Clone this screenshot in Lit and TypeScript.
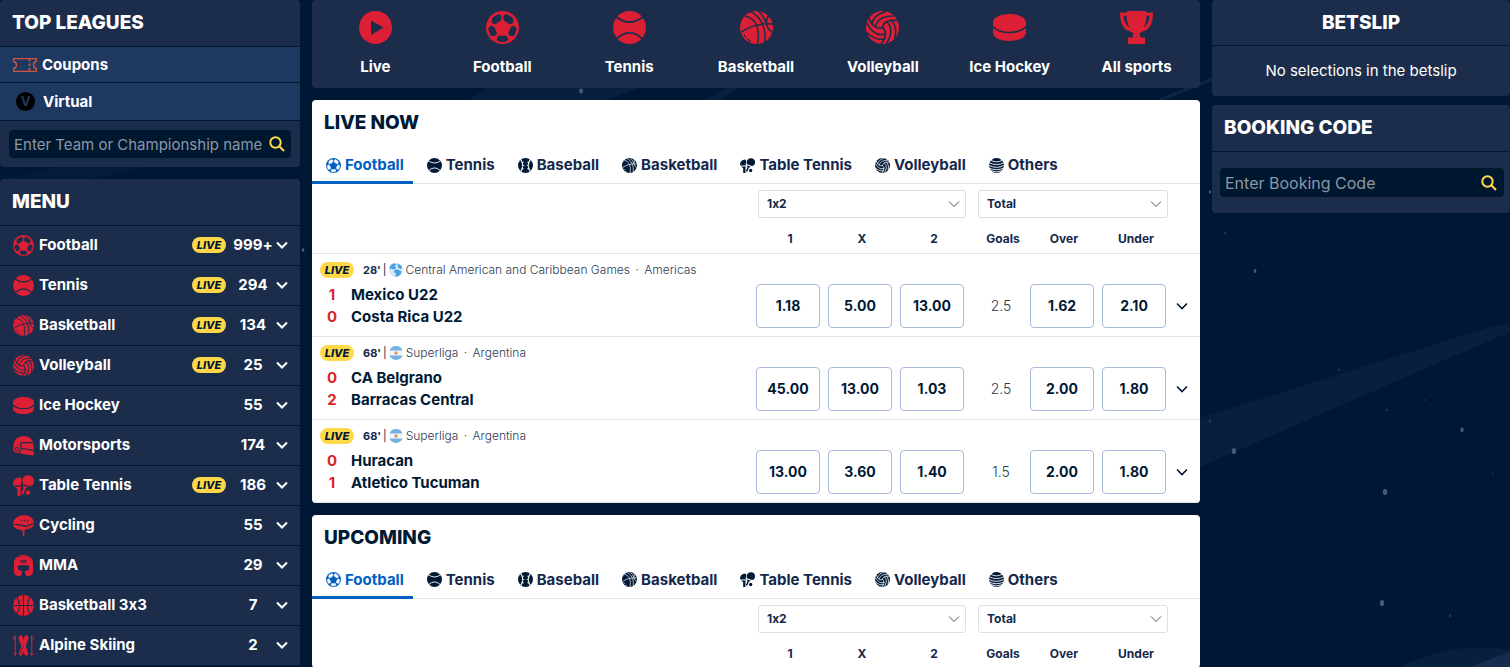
import { LitElement, html, css, svg, nothing } from "lit";
import { customElement, property } from "lit/decorators.js";

type Art = ReturnType<typeof svg>;

const seam = svg`<g fill="none" stroke="var(--cut)" stroke-width="1.6">
  <path d="M16.500 17C17 12 21 8 32 9.500"/>
  <path d="M9.500 16.500C10 10 16 4.500 28.500 5"/>
  <path d="M5.500 13.500C7 7 12 2.500 20 .5"/>
</g>`;

const ICONS: Record<string, Art> = {
  live: svg`<circle cx="16.5" cy="16.5" r="16.5"/><path d="M12 9.500L24.500 16.500L12 24Z" fill="var(--cut)"/>`,
  football: svg`<circle cx="16.5" cy="16.5" r="16.5"/>
    <g fill="var(--cut)" stroke="var(--cut)" stroke-linejoin="round" stroke-width="1">
      <path d="M6.500 7L12.500 3.500L15 4.800V9L9 13L6 11.500Z"/>
      <path d="M26.500 7L20.500 3.500L18 4.800V9L24 13L27 11.500Z"/>
      <path d="M2.500 17.500L5.500 15L8 16.500L10.500 22.500L9 24.500H5Z"/>
      <path d="M30.500 17.500L27.500 15L25 16.500L22.500 22.500L24 24.500H28Z"/>
      <path d="M12.500 25.200H20.500L22 28.500L19.500 30.500H13.500L11 28.500Z"/>
    </g>`,
  tennis: svg`<circle cx="16.5" cy="16.5" r="16.5"/>
    <path d="M2.500 5.500Q16.500 16.500 30.500 5.500M3.500 28Q16.500 15.500 29.500 28" fill="none" stroke="var(--cut)" stroke-width="2"/>`,
  baseball: svg`<circle cx="16.5" cy="16.5" r="16.5"/>
    <path d="M6 3.500Q15.500 16.500 6 29.500M27 3.500Q17.500 16.500 27 29.500" fill="none" stroke="var(--cut)" stroke-width="2.400"/>
    <path d="M7.500 11L13 9M8.500 16.500H14M7.500 22L13 24M25.500 11L20 9M24.500 16.500H19M25.500 22L20 24" fill="none" stroke="var(--cut)" stroke-width="1.500"/>`,
  basketball: svg`<circle cx="16.5" cy="16.5" r="16.5"/>
    <g fill="none" stroke="var(--cut)" stroke-width="1.500">
      <path d="M5 5C14 7 21 15 17.500 33"/><path d="M11 1C20 5 27 17 24.500 32"/>
      <path d="M18 0C22 3 25 8 26 12.500"/><path d="M1 21.500C9 15 20 12 33 13"/>
      <path d="M28.500 4.500C25 10 26 17 32 21"/><path d="M4 23.500L6 26.500M7.500 28L10.500 30.500" stroke-width="1.200"/>
    </g>`,
  volleyball: svg`<circle cx="16.5" cy="16.5" r="16.5"/>${seam}
    <g transform="rotate(120 16.5 16.5)">${seam}</g><g transform="rotate(240 16.5 16.5)">${seam}</g>`,
  puck: svg`<path d="M0 11.500C0 6.500 7.500 3 16.500 3S33 6.500 33 11.500V21.500C33 26.500 25.500 30 16.500 30S0 26.500 0 21.500Z"/>
    <path d="M-.5 15.500C4 20 10 21.500 16.500 21.500S29 20 33.500 15.500" fill="none" stroke="var(--cut)" stroke-width="1.700"/>`,
  trophy: svg`<path d="M7 0H26V1.500H33C33 10 31 18.500 22.500 20.500L19.500 22.500L20.500 26.500H25V33H8V26.500H12.500L13.500 22.500L10.500 20.500C2 18.500 0 10 0 1.500H7Z"/>
    <path d="M3.500 4.800H6.500C6.500 9.500 7.500 13 9.500 16.500C5.500 14 3.800 10 3.500 4.800ZM29.500 4.800H26.500C26.500 9.500 25.500 13 23.500 16.500C27.500 14 29.200 10 29.500 4.800Z" fill="var(--cut)"/>`,
  helmet: svg`<path d="M1 17C1 7 8 1.500 17 1.500C25 1.500 30 6 32 12L33 30C33 31.500 32 32.500 30.500 32.300L3 27.500C0 26 0 20 1 17Z"/>
    <path d="M31.500 12H15.500C12 12 11 14.500 12 17.500L13 21L33 24.500" fill="none" stroke="var(--cut)" stroke-width="1.800"/>
    <path d="M12.500 21L10.500 28.500" fill="none" stroke="var(--cut)" stroke-width="1.500"/>
    <circle cx="6" cy="22.500" r="2.800" fill="none" stroke="var(--cut)" stroke-width="1.500"/>`,
  paddles: svg`<path d="M0 15C0 8 4.500 4 11 3.500C12.500 4 13.500 5 13.500 7L12.500 16.500H1C.3 16.500 0 16 0 15Z"/>
    <path d="M2.500 18.500H13L12 22.500V33H7V22.500Z"/>
    <path d="M14.500 9C15 3 20 0 25 .5C30.500 1 34 6 33 11C32.500 15 30 17 26.500 17.500L15.500 14Z"/>
    <path d="M15 16L24 19L19.500 21.500L16 30.500L12.800 29L16.500 20.500Z"/><circle cx="23.500" cy="27.500" r="3.600"/>`,
  cycling: svg`<path d="M0 14C1 5.500 8 .5 17.500 .5C26.500 .5 32 5 33 12L22 16.500L8 14Z"/>
    <path d="M0 15.500L8 16.300L21 19L33 14C32.500 17.500 29 20.500 25 21.500C21 22.500 18.500 22 18 25V33H15.500V25.500C14 22.500 9.500 23.500 5.500 21.500C2 19.500 0 18 0 15.500Z"/>
    <g fill="var(--cut)"><circle cx="14" cy="9" r="1.200"/><circle cx="18.500" cy="9" r="1.200"/><circle cx="23" cy="9" r="1.200"/></g>`,
  mma: svg`<path d="M11.500 0H21.500V2H11.500Z"/>
    <path d="M8 2.500H25C29 4 31.500 8 31.500 13V27C31 30.500 28 32.500 24 33C21 33 19 32 19.500 29L18 25.500L24.500 23.500C26 19 26 16.500 23 16H10C7 16.500 7 19 8.500 23.500L15 25.500L13.500 29C14 32 12 33 9 33C5 32.500 2 30.500 1.500 27V13C1.500 8 4 4 8 2.500Z"/>
    <path d="M12.500 8.500H20.500V11.500H12.500Z" fill="none" stroke="var(--cut)" stroke-width="1.500"/>`,
  ball3: svg`<circle cx="16.5" cy="16.5" r="16.5"/>
    <path d="M16.500 0V33M0 16.500H33M6 3Q14.500 16.500 6 30M27 3Q18.500 16.500 27 30" fill="none" stroke="var(--cut)" stroke-width="1.700"/>`,
  ski: svg`<path d="M9.500 1.500C11 -.5 14 0 15 2.500L24 29L21.500 33L18.500 31L8.500 5Z"/><path d="M23.500 1.500C22 -.5 19 0 18 2.500L9 29L11.500 33L14.500 31L24.500 5Z"/>
    <path d="M3.500 10V33M29.500 10V33M1 29.500H6M27 29.500H32" fill="none" stroke="currentColor" stroke-width="1.600"/>
    <path d="M1 3L4 1.500V10M32 3L29 1.500V10M1 3V7L4 9M32 3V7L29 9" fill="none" stroke="currentColor" stroke-width="1.500"/>
    <path d="M16.500 16L11 29" stroke="var(--cut)" fill="none"/>`,
  others: svg`<circle cx="16.5" cy="16.5" r="16.5"/>
    <path d="M3 4.500Q16.500 12.500 30 4.500M-1 10Q16.500 19 34 10M-1 16Q16.500 25 34 16M-1 21.500Q16.500 30 34 21.500M3 27.500Q16.500 34 30 27.500" fill="none" stroke="var(--cut)" stroke-width="1.900"/>`,
};

@customElement("sport-icon")
export class SportIcon extends LitElement {
  @property() name = "football";
  static styles = css`
    :host { display: block; flex: none; width: 21px; height: 21px; }
    svg { display: block; width: 100%; height: 100%; }
  `;
  render() {
    return html`<svg viewBox="0 0 33 33" fill="currentColor" aria-hidden="true">${ICONS[this.name]}</svg>`;
  }
}

const NAV = [
  ["live", "Live"], ["football", "Football"], ["tennis", "Tennis"], ["basketball", "Basketball"],
  ["volleyball", "Volleyball"], ["puck", "Ice Hockey"], ["trophy", "All sports"],
];

const TABS = [
  ["football", "Football"], ["tennis", "Tennis"], ["baseball", "Baseball"], ["basketball", "Basketball"],
  ["paddles", "Table Tennis"], ["volleyball", "Volleyball"], ["others", "Others"],
];

const MENU: [string, string, boolean, string][] = [
  ["football", "Football", true, "999+"],
  ["tennis", "Tennis", true, "294"],
  ["basketball", "Basketball", true, "134"],
  ["volleyball", "Volleyball", true, "25"],
  ["puck", "Ice Hockey", false, "55"],
  ["helmet", "Motorsports", false, "174"],
  ["paddles", "Table Tennis", true, "186"],
  ["cycling", "Cycling", false, "55"],
  ["mma", "MMA", false, "29"],
  ["ball3", "Basketball 3x3", false, "7"],
  ["ski", "Alpine Skiing", false, "2"],
];

interface Match {
  minute: string; flag: string; league: string; region: string;
  home: string; away: string; score: [number, number];
  result: string[]; goals: string; total: string[];
}

const MATCHES: Match[] = [
  { minute: "28'", flag: "world", league: "Central American and Caribbean Games", region: "Americas", home: "Mexico U22", away: "Costa Rica U22", score: [1, 0], result: ["1.18", "5.00", "13.00"], goals: "2.5", total: ["1.62", "2.10"] },
  { minute: "68'", flag: "ar", league: "Superliga", region: "Argentina", home: "CA Belgrano", away: "Barracas Central", score: [0, 2], result: ["45.00", "13.00", "1.03"], goals: "2.5", total: ["2.00", "1.80"] },
  { minute: "68'", flag: "ar", league: "Superliga", region: "Argentina", home: "Huracan", away: "Atletico Tucuman", score: [0, 1], result: ["13.00", "3.60", "1.40"], goals: "1.5", total: ["2.00", "1.80"] },
];

const chevron = html`<svg class="chevron" viewBox="0 0 12 8" aria-hidden="true"><path d="M1 1.500L6 6.500L11 1.500" /></svg>`;
const magnifier = html`<svg class="magnifier" viewBox="0 0 16 16" aria-hidden="true"><circle cx="6.500" cy="6.500" r="5.200" /><path d="M10.300 10.300L15 15" /></svg>`;

const flags: Record<string, unknown> = {
  world: html`<svg class="flag" viewBox="0 0 14 14" aria-hidden="true"><circle cx="7" cy="7" r="7" fill="#d3e6f8" /><path d="M.2 5.500C1 2 3 .5 5.500 .2L7.500 1.500L5.500 3L7.500 5L5 6.500L3 6ZM8.500 .5L12 2.500L13.500 5L11 6L9 4ZM5.500 7L9 6.500L12.500 8.500L11.500 11.500L8 13.800L6.500 13.500L7 10.500L5 9Z" fill="#4ba0e4" /></svg>`,
  ar: html`<svg class="flag" viewBox="0 0 14 14" aria-hidden="true"><circle cx="7" cy="7" r="7" fill="#f3f5f8" /><path d="M.5 4.500A7 7 0 0 1 13.500 4.500ZM.5 9.500A7 7 0 0 0 13.500 9.500Z" fill="#75b2e4" /><circle cx="7" cy="7" r="1.700" fill="#d99a55" /></svg>`,
};

@customElement("app-root")
export class AppRoot extends LitElement {
  static styles = css`
    :host {
      --card: #1b2d4a;
      --ink: #001a35;
      --cut: var(--card);
      display: block;
      position: relative;
      height: 100vh;
      overflow: hidden;
      background: #001736;
      color: #fff;
      font: 700 15px/20px Inter, "Open Sans", sans-serif;
      font-variant-ligatures: no-contextual;
    }
    * { box-sizing: border-box; }
    h2 { margin: 0; font-size: 19px; line-height: 24px; font-weight: 800; }
    a { color: inherit; text-decoration: none; }
    ul { margin: 0; padding: 0; list-style: none; }
    button, input, select { font: inherit; font-variant-ligatures: inherit; color: inherit; }
    button { padding: 0; border: 0; background: none; cursor: pointer; }
    .backdrop { position: absolute; inset: 0; width: 100%; height: 100%; }
    .page { position: relative; display: grid; grid-template-columns: 300px minmax(0, 1fr) 298px; gap: 12px; align-items: start; }
    .column { display: grid; gap: 12px; min-width: 0; }
    .column.slip { gap: 9px; }
    .card { background: var(--card); border-radius: 4px; overflow: hidden; }
    .card > h2 { padding: 11px 12px; border-bottom: 1px solid var(--ink); }
    .card > h2.centered { padding-bottom: 10px; text-align: center; }

    .quick { display: flex; align-items: center; gap: 5px; height: 36px; padding: 0 13px; background: #1f385f; border-bottom: 1px solid var(--ink); }
    .quick.tall { height: 38px; padding: 0 16px; gap: 8px; }
    .ticket { width: 24px; height: 14px; fill: none; stroke: #d2553a; stroke-width: 1.3; }
    .disc { width: 19px; height: 19px; border-radius: 50%; background: #000; color: #1f385f; font-size: 13px; line-height: 19px; text-align: center; }

    .search { display: flex; align-items: center; margin: 9px; height: 28px; padding: 0 6px 0 5px; border-radius: 4px; background: #00182f; font-weight: 400; }
    .search.code { height: 29px; margin: 16px 6px 16px 8px; padding-right: 7px; font-size: 16px; }
    .search input { flex: 1; min-width: 0; height: 24px; padding: 0; border: 0; outline: 0; background: none; }
    .search input::placeholder { color: #8b97a8; opacity: 1; }
    .magnifier { display: block; width: 16px; height: 16px; fill: none; stroke: #ffd84a; stroke-width: 2; }

    .menu a { display: flex; align-items: center; height: 40px; padding: 0 12px 1px 13px; border-bottom: 1px solid var(--ink); }
    .menu sport-icon, .nav sport-icon { color: #dc1f34; }
    .menu .name { flex: 1; padding-left: 5px; }
    .menu .count { width: 44px; margin: 0 1px 0 5px; text-align: center; }
    .chevron { display: block; width: 12px; height: 8px; fill: none; stroke: currentColor; stroke-width: 2; }
    .live { display: block; flex: none; width: 34px; height: 16px; border-radius: 8px; background: #ffd84a; color: var(--ink); font: italic 800 11px/16px Inter, "Open Sans", sans-serif; text-align: center; }

    .nav { display: flex; height: 88px; padding: 11px 0 0; }
    .nav a { flex: 1; display: flex; flex-direction: column; align-items: center; gap: 13px; }
    .nav sport-icon { width: 33px; height: 33px; }

    .board { --cut: #fff; background: #fff; color: var(--ink); }
    .board > h2 { border: 0; }
    .tabs { display: flex; border-bottom: 1px solid #e2e4e7; }
    .tab { display: flex; align-items: center; gap: 4px; height: 38px; margin-bottom: -1px; padding: 3px 9px 0 14px; border-bottom: 3px solid transparent; color: #14284b; }
    .tab sport-icon { width: 15px; height: 15px; color: var(--ink); }
    .tab.on, .tab.on sport-icon { color: #0060bf; }
    .tab.on { border-color: #0060bf; }

    table { width: 100%; border-collapse: collapse; table-layout: fixed; }
    td, th { padding: 0; font-weight: inherit; }
    .odd { width: 72px; }
    .goals { width: 58px; }
    .more { width: 30px; }
    .pickers td { height: 42px; padding: 0 2px 0 6px; }
    .pickers td.total { padding-left: 10px; }
    .pickers select { display: block; width: 100%; height: 28px; margin-bottom: 2px; padding: 0 8px; border: 1px solid #dcdfe4; border-radius: 3px; appearance: none; color: #14284b; font-size: 12px; background: #fff url("data:image/svg+xml,%3Csvg xmlns='http://www.w3.org/2000/svg' width='12' height='8' fill='none' stroke='%2344546d'%3E%3Cpath d='M1 1.500L6 6.500L11 1.500'/%3E%3C/svg%3E") no-repeat right 5px center; }
    .labels th { height: 27px; padding: 0 0 0 4px; border-bottom: 1px solid #e2e4e7; color: #14284b; font-size: 12px; line-height: 26px; }
    .labels th.goals-label { padding-left: 12px; }
    .match > td { height: 83px; border-bottom: 1px solid #e2e4e7; vertical-align: bottom; padding: 0 4px 8px; }
    .match > td.event { padding: 0 0 8px 8px; vertical-align: top; }
    .meta { display: flex; align-items: center; height: 16px; margin: 8px 0 6px; font-size: 11px; color: #14284b; }
    .minute { padding-left: 9px; }
    .bar { padding: 0 2px; font-weight: 400; }
    .flag { width: 14px; height: 14px; margin-right: 3px; }
    .league { font-weight: 300; color: #2b3a52; font-size: 12px; }
    .dot { margin: 0 2px; }
    .side { display: grid; grid-template-columns: 24px 1fr; column-gap: 7px; line-height: 22px; }
    .score { color: #dc1f26; text-align: center; }
    .price { display: block; width: 100%; height: 44px; border: 1px solid #a9b9dc; border-radius: 4px; font-size: 14px; }
    .match > td.line { padding-left: 12px; font-weight: 300; font-size: 14px; line-height: 44px; color: #2b3a52; text-align: center; }
    .match > td.expand { padding: 0 12px 8px 6px; }
    .expand button { display: block; width: 12px; height: 44px; }
    .expand .chevron { stroke-width: 1.6; }
    .empty { margin: 0; padding: 15px 12px; text-align: center; font-weight: 400; }
  `;

  private live() {
    return html`<span class="live">LIVE</span>`;
  }

  private price(value: string) {
    return html`<td><button class="price">${value}</button></td>`;
  }

  private match(m: Match) {
    return html`<tr class="match">
      <td class="event">
        <div class="meta">${this.live()}<span class="minute">${m.minute}</span><span class="bar">|</span>${flags[m.flag]}<span class="league">${m.league} <span class="dot">·</span> ${m.region}</span></div>
        <div class="side"><span class="score">${m.score[0]}</span><span>${m.home}</span></div>
        <div class="side"><span class="score">${m.score[1]}</span><span>${m.away}</span></div>
      </td>
      ${m.result.map((v) => this.price(v))}
      <td class="line">${m.goals}</td>
      ${m.total.map((v) => this.price(v))}
      <td class="expand"><button aria-label="More markets">${chevron}</button></td>
    </tr>`;
  }

  private board(title: string, matches: Match[]) {
    return html`<section class="card board">
      <h2>${title}</h2>
      <div class="tabs" role="tablist">
        ${TABS.map(([icon, label], i) => html`<button class="tab ${i === 0 ? "on" : ""}" role="tab" aria-selected=${i === 0}><sport-icon name=${icon}></sport-icon>${label}</button>`)}
      </div>
      <table>
        <colgroup><col /><col class="odd" /><col class="odd" /><col class="odd" /><col class="goals" /><col class="odd" /><col class="odd" /><col class="more" /></colgroup>
        <thead>
          <tr class="pickers">
            <td></td>
            <td colspan="3"><select aria-label="Result market"><option>1x2</option></select></td>
            <td colspan="3" class="total"><select aria-label="Goals market"><option>Total</option></select></td>
            <td></td>
          </tr>
          <tr class="labels">
            <th></th><th>1</th><th>X</th><th>2</th><th class="goals-label">Goals</th><th>Over</th><th>Under</th><th></th>
          </tr>
        </thead>
        <tbody>${matches.map((m) => this.match(m))}</tbody>
      </table>
    </section>`;
  }

  private backdrop() {
    const specks = [[581, 91, 2.2], [303, 250, 1.6], [1210, 421, 1.2], [1225, 233, 1], [1255, 271, 1.6], [1339, 370, 1], [1387, 410, 1], [1425, 400, 0.8], [1462, 430, 2], [1234, 451, 2.6], [1385, 492, 2.6], [1493, 474, 0.8], [1382, 603, 2.6], [1450, 616, 1.2], [1210, 192, 1.5]];
    return html`<svg class="backdrop" viewBox="0 0 1510 667" preserveAspectRatio="none" aria-hidden="true">
      <g fill="#08203f">
        <path d="M1200 418L1490 327Q1506 324 1510 325V332L1440 362L1200 467Z" />
        <path d="M468 100L488 88H640L606 100Z" />
        <path d="M704 100L726 88H738L720 100Z" />
        <path d="M0 179L60 167H150L90 179Z" opacity=".5" />
        <path d="M1400 667Q1455 640 1510 650V667Z" />
      </g>
      <path d="M1470 667L1510 652V667Z" fill="#172c4e" />
      <path d="M1160 100L1212 79" stroke="#0d2645" stroke-width="3" />
      <g fill="#4a6184">${specks.map(([x, y, r]) => svg`<ellipse cx=${x} cy=${y} rx=${r * 0.85} ry=${r * 1.2} opacity=${r > 1.3 ? 0.9 : 0.5} />`)}</g>
    </svg>`;
  }

  render() {
    return html`${this.backdrop()}
      <div class="page">
        <aside class="column">
          <section class="card">
            <h2>TOP LEAGUES</h2>
            <a class="quick" href="#coupons"><svg class="ticket" viewBox="0 0 24 14" aria-hidden="true"><path d="M.7 .7H23.300V3.500Q20.500 4 20.500 7T23.300 10.500V13.300H.7V10.500Q3.500 10 3.500 7T.7 3.500Z" /><path d="M16.500 1V13" stroke-dasharray="2.500 2" stroke-width="1.800" /></svg>Coupons</a>
            <a class="quick tall" href="#virtual"><span class="disc" aria-hidden="true">V</span>Virtual</a>
            <div class="search"><input type="text" aria-label="Team or championship" placeholder="Enter Team or Championship name" /><button aria-label="Search">${magnifier}</button></div>
          </section>
          <section class="card">
            <h2>MENU</h2>
            <ul class="menu">
              ${MENU.map(([icon, name, live, count]) => html`<li><a href="#sport"><sport-icon name=${icon}></sport-icon><span class="name">${name}</span>${live ? this.live() : nothing}<span class="count">${count}</span>${chevron}</a></li>`)}
            </ul>
          </section>
        </aside>
        <main class="column">
          <nav class="card nav">${NAV.map(([icon, label]) => html`<a href="#nav"><sport-icon name=${icon}></sport-icon>${label}</a>`)}</nav>
          ${this.board("LIVE NOW", MATCHES)} ${this.board("UPCOMING", [])}
        </main>
        <aside class="column slip">
          <section class="card">
            <h2 class="centered">BETSLIP</h2>
            <p class="empty">No selections in the betslip</p>
          </section>
          <section class="card">
            <h2>BOOKING CODE</h2>
            <div class="search code"><input type="text" aria-label="Booking code" placeholder="Enter Booking Code" /><button aria-label="Load booking">${magnifier}</button></div>
          </section>
        </aside>
      </div>`;
  }
}
